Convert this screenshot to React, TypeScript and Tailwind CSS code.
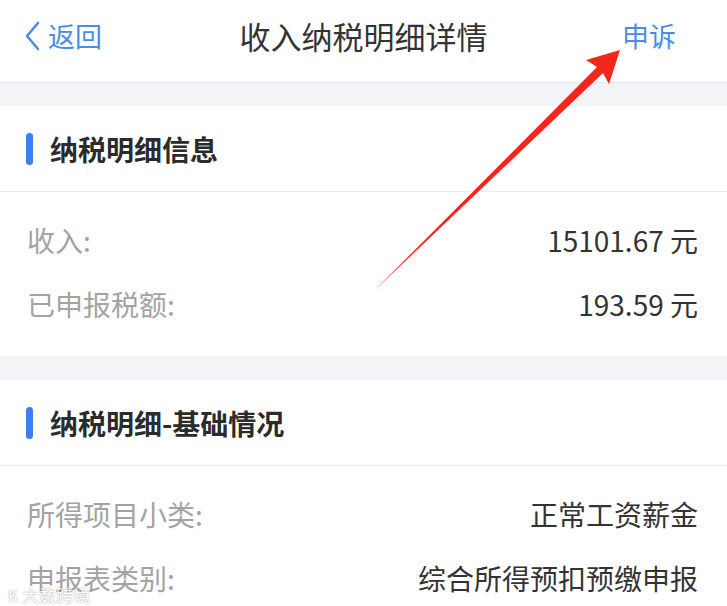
import React from "react";

type Row = { label: string; value: string };

const sections: { title: string; rows: Row[] }[] = [
  {
    title: "纳税明细信息",
    rows: [
      { label: "收入:", value: "15101.67 元" },
      { label: "已申报税额:", value: "193.59 元" },
    ],
  },
  {
    title: "纳税明细-基础情况",
    rows: [
      { label: "所得项目小类:", value: "正常工资薪金" },
      { label: "申报表类别:", value: "综合所得预扣预缴申报" },
    ],
  },
];

function Section({ title, rows }: { title: string; rows: Row[] }) {
  return (
    <section className="bg-white">
      <div className="flex h-[86px] items-center border-b border-[#ececec] pl-[26px]">
        <span className="h-[32px] w-[7px] rounded-full bg-[#3d7ff0]" />
        <h2 className="ml-[17px] text-[28px] font-bold text-[#2b2b2b]">{title}</h2>
      </div>
      <div className="pb-[20px] pl-[27px] pr-[29px] pt-[16px]">
        {rows.map((r) => (
          <div key={r.label} className="flex h-[64px] items-center justify-between">
            <span className="text-[28px] text-[#a3a3a3]">{r.label}</span>
            <span className="text-[28px] text-[#333333]">{r.value}</span>
          </div>
        ))}
      </div>
    </section>
  );
}

export default function App() {
  return (
    <main
      className="relative h-[606px] w-[727px] overflow-hidden bg-[#f2f4f7]"
      style={{ fontFamily: '"Noto Sans CJK SC", "Noto Sans", sans-serif' }}
    >
      {/* Header */}
      <header className="grid h-[83px] grid-cols-[1fr_auto_1fr] items-center border-b border-[#e3e5e8] bg-white px-[22px] pb-[10px]">
        <button className="flex items-center justify-self-start text-[#4a8de6]">
          <svg className="h-[32px] w-[20px]" viewBox="0 0 20 32" fill="none">
            <path d="M16 3L5 16l11 13" stroke="currentColor" strokeWidth={2.6} strokeLinecap="round" strokeLinejoin="round" />
          </svg>
          <span className="ml-[6px] text-[27px]">返回</span>
        </button>
        <h1 className="text-[31px] text-[#333333]">收入纳税明细详情</h1>
        <button className="mr-[29px] justify-self-end text-[27px] text-[#4a8de6]">申诉</button>
      </header>

      <div className="flex flex-col gap-[24px] pt-[23px]">
        {sections.map((s) => (
          <Section key={s.title} title={s.title} rows={s.rows} />
        ))}
      </div>

      {/* Red annotation arrow */}
      <svg className="pointer-events-none absolute left-0 top-0" width={727} height={606} viewBox="0 0 727 606">
        <polygon
          points="375,290 597,67 586,60 620,50 609,84 603,73"
          fill="#f3261c"
        />
      </svg>

      {/* Watermark */}
      <div className="pointer-events-none absolute left-[8px] top-[582px] flex items-center gap-[4px] text-[17px] text-white opacity-90 [text-shadow:0_0_2px_rgba(0,0,0,0.45)]">
        <span className="text-[16px]">K</span>
        <span>大数跨境</span>
      </div>
    </main>
  );
}
